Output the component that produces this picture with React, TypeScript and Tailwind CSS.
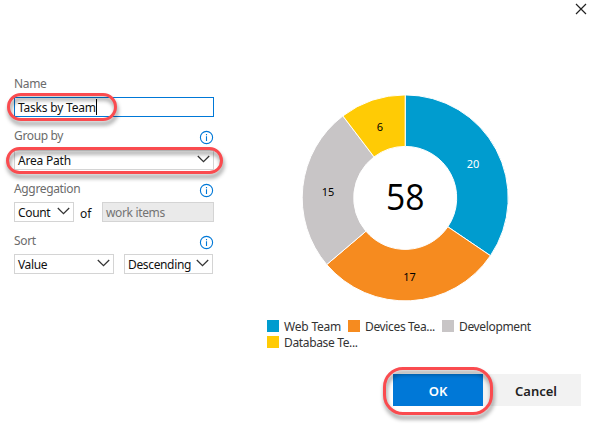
import React from "react";

function Info() {
  return (
    <svg width="15" height="15" viewBox="0 0 15 15" fill="none" className="block shrink-0">
      <circle cx="7.5" cy="7.5" r="6.1" stroke="#0078d7" strokeWidth="1.1" />
      <path d="M7.5 6.3V11M7.5 4V5.2" stroke="#0078d7" strokeWidth="1.1" />
    </svg>
  );
}

function Chevron() {
  return (
    <svg width="13" height="8" viewBox="0 0 13 8" fill="none" className="block shrink-0">
      <path d="M0.8 1L6.5 6.6L12.2 1" stroke="#333" strokeWidth="1.3" />
    </svg>
  );
}

function Label({ text, info }: { text: string; info?: boolean }) {
  return (
    <div className="flex h-[32px] w-[200px] items-center justify-between text-[#6b6b6b]">
      <span className="pt-[6px]">{text}</span>
      {info && <span className="pt-[8px]"><Info /></span>}
    </div>
  );
}

function Select({ text, className }: { text: string; className: string }) {
  return (
    <div className={`flex h-5 items-center justify-between border border-[#d4d4d4] bg-white pl-[3px] pr-[3px] ${className}`}>
      <span className="pt-px">{text}</span>
      <span className="pb-[2px]"><Chevron /></span>
    </div>
  );
}

const slices = [
  { value: 20, color: "#009ccf", text: "#fff", x: 473, y: 168 },
  { value: 17, color: "#f68b1f", text: "#000", x: 409.5, y: 281 },
  { value: 15, color: "#c8c5c6", text: "#000", x: 328, y: 196 },
  { value: 6, color: "#ffcb05", text: "#000", x: 380, y: 131 },
];

function Donut() {
  const cx = 405.2, cy = 197.9, R = 103, r = 51.5;
  let total = 0;
  const pt = (rad: number, a: number) => `${cx + rad * Math.sin(a)} ${cy - rad * Math.cos(a)}`;
  return (
    <svg width="220" height="220" viewBox="295 88 220 220" className="block">
      {slices.map((s) => {
        const a = (total / 58) * Math.PI * 2;
        total += s.value;
        const b = (total / 58) * Math.PI * 2;
        return (
          <path
            key={s.value}
            d={`M${pt(R, a)}A${R} ${R} 0 0 1 ${pt(R, b)}L${pt(r, b)}A${r} ${r} 0 0 0 ${pt(r, a)}Z`}
            fill={s.color}
            stroke="#fff"
            strokeWidth="1"
          />
        );
      })}
      {slices.map((s) => (
        <text key={s.value} x={s.x} y={s.y} fill={s.text} fontSize="11" textAnchor="middle">{s.value}</text>
      ))}
      <text x="405.3" y="210" fontSize="36" textAnchor="middle" textLength="38.5" lengthAdjust="spacingAndGlyphs" className="font-['Open_Sans']">58</text>
    </svg>
  );
}

function Legend({ color, text, className }: { color: string; text: string; className: string }) {
  return (
    <div className={`flex h-4 items-center ${className}`}>
      <span className={`h-3 w-3 shrink-0 ${color}`} />
      <span className="whitespace-nowrap pl-[5px] pt-[2px]">{text}</span>
    </div>
  );
}

function Ring({ className }: { className: string }) {
  return <div className={`pointer-events-none absolute border-[3px] border-[#fa4b4f] drop-shadow-[1px_4px_2px_rgba(0,0,0,0.45)] ${className}`} />;
}

export default function App() {
  return (
    <div className="relative flex h-[426px] w-[595px] flex-col overflow-hidden bg-white font-['Noto_Sans','Open_Sans',sans-serif] text-[12px] leading-4 tracking-[-0.35px] text-[#111]">
      <header className="flex h-[70px] shrink-0 justify-end pr-[8px] pt-[3px]">
        <svg width="12" height="12" viewBox="0 0 12 12" fill="none">
          <path d="M1 1L11 11M11 1L1 11" stroke="#222" strokeWidth="1.2" />
        </svg>
      </header>
      <main className="flex h-[304px] shrink-0">
        <section className="w-[254px] shrink-0 pl-[14px]">
          <div className="flex h-[27px] items-center pt-px text-[#6b6b6b]">Name</div>
          <div className="flex h-5 w-[200px] items-center border border-[#0078d7] pl-[3px]">
            <span className="pt-px tracking-[-0.2px]">Tasks by Team</span>
            <span className="h-4 w-px bg-black" />
          </div>
          <div className="h-[33px]"><Label text="Group by" info /></div>
          <Select text="Area Path" className="w-[200px] tracking-[-0.2px]" />
          <Label text="Aggregation" info />
          <div className="flex h-5 items-center">
            <Select text="Count" className="w-[60px]" />
            <span className="w-7 pl-[6px] pt-[3px] tracking-normal">of</span>
            <div className="flex h-5 w-[112px] items-center border border-[#d4d4d4] bg-[#eaeaea] pl-[3px] pt-px text-[#737373]">work items</div>
          </div>
          <Label text="Sort" info />
          <div className="flex gap-[10px]">
            <Select text="Value" className="w-[100px]" />
            <Select text="Descending" className="w-[89px]" />
          </div>
        </section>
        <section className="pl-[13px] pt-[18px]">
          <div className="pl-[28px] tracking-normal"><Donut /></div>
          <div className="pt-[10px] text-[#333]">
            <div className="flex">
              <Legend color="bg-[#009ccf]" text="Web Team" className="w-[81px] tracking-[-0.2px]" />
              <Legend color="bg-[#f68b1f]" text="Devices Tea..." className="w-[94px]" />
              <Legend color="bg-[#c8c5c6]" text="Development" className="w-[100px]" />
            </div>
            <Legend color="bg-[#ffcb05]" text="Database Te..." className="w-[110px]" />
          </div>
        </section>
      </main>
      <footer className="flex h-8 pl-[393px] text-[13px] font-semibold tracking-normal">
        <button className="w-[90px] bg-[#0078d7] pt-[2px] text-white">OK</button>
        <button className="w-[98px] bg-[#f2f2f2] pl-[8px] pt-[2px] text-[#222]">Cancel</button>
      </footer>
      <Ring className="left-[7px] top-[93px] h-[28px] w-[110px] rounded-[14px]" />
      <Ring className="left-[6px] top-[147px] h-[27px] w-[217px] rounded-[14px]" />
      <Ring className="left-[383px] top-[367px] h-[48px] w-[110px] rounded-[20px]" />
    </div>
  );
}
